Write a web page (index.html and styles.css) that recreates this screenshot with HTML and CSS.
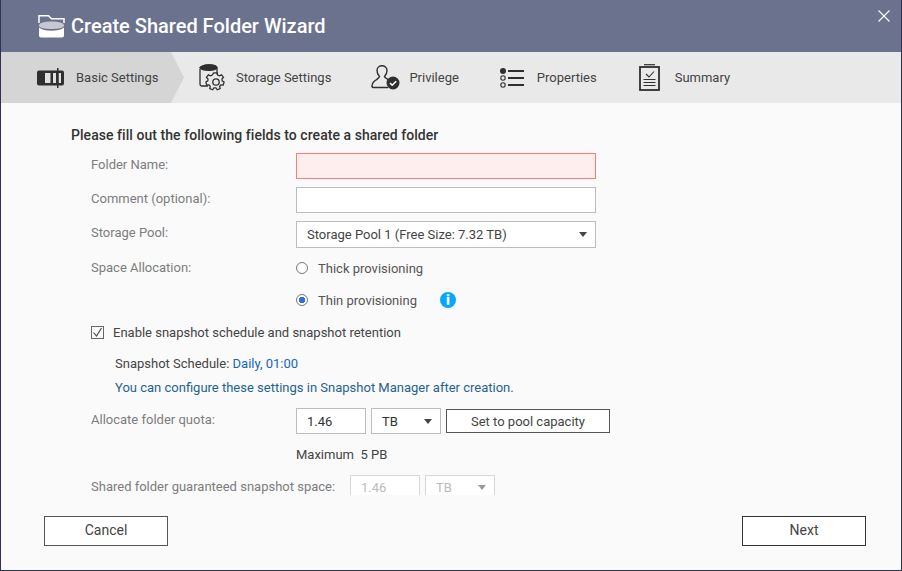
FILE: index.html
```html
<!DOCTYPE html>
<html lang="en">
<head>
<meta charset="utf-8">
<title>Create Shared Folder Wizard</title>
<link rel="stylesheet" href="styles.css">
</head>
<body>
<div class="window">
  <header class="titlebar">
    <svg class="title-icon" width="27" height="24" viewBox="0 0 27 24">
      <path d="M1 9V1.800h9.500l3 3H26V9" fill="none" stroke="#fff" stroke-width="1.500"/>
      <path d="M1 11Q2 7.500 13.500 7.500T26 11v1Q25 15 13.500 15T1 12Z" fill="#c6c8d4"/>
      <path d="M1 13.500Q5 16.800 13.500 16.800T26 13.500V21.500q0 2-2 2H3q-2 0-2-2Z" fill="#fff"/>
    </svg>
    <h1 class="title">Create Shared Folder Wizard</h1>
    <svg class="close" width="12" height="12" viewBox="0 0 12 12"><path d="M.5.5l11 11M11.500.5l-11 11" stroke="#fff" stroke-width="1.100"/></svg>
  </header>
  <nav class="steps">
    <div class="step step-active">
      <svg width="29" height="20" viewBox="0 0 29 20" class="ico-basic">
        <rect x="0" y="2.500" width="27" height="15" rx="2" fill="#2f2f2f"/>
        <rect x="8" y="5" width="5.500" height="10" fill="#e0e0e0"/>
        <rect x="16" y="5" width="3" height="10" fill="#e0e0e0"/>
        <rect x="21.500" y="5" width="2.500" height="10" fill="#e0e0e0"/>
        <rect x="20" y="0" width="1.500" height="20" fill="#2f2f2f"/>
      </svg>
      <span>Basic Settings</span>
    </div>
    <div class="step step-storage">
      <svg width="27" height="28" viewBox="0 0 27 28" fill="none" stroke="#2f2f2f" stroke-width="1.300">
        <path d="M9 22H3q-2 0-2-2V5" />
        <path d="M1 4.500C1 2.500 5 1 10 1s8 1.500 8 3.500v6"/>
        <path d="M1 3.500C3 1.500 6 .8 10 .8s7 .7 8 2.700c-1 2.200-4 2.800-8 2.800S2 5.700 1 3.500Z" fill="#2f2f2f"/>
        <path d="M15.500 11h3.500l.6 2.300 1.700.8 2.200-1 2 2.600-1.600 1.700.2 1.800 2 1.200-.9 3.100-2.400-.1-1.200 1.400.5 2.300-3 1.200-1.300-2h-2l-1.300 2-3-1.200.5-2.300-1.200-1.400-2.400.1-.9-3.100 2-1.200.2-1.800-1.600-1.700 2-2.600 2.200 1 1.700-.8Z" transform="translate(-.5 -2) scale(.98)"/>
        <circle cx="17" cy="18" r="3.200"/>
      </svg>
      <span>Storage Settings</span>
    </div>
    <div class="step step-privilege">
      <svg width="29" height="25" viewBox="0 0 29 25" class="ico-priv">
        <path d="M18 15c-2-1-4-2-4.500-3.500C15 10 16 7.500 16 5.500 16 2.500 13.500.8 11 .8S6 2.500 6 5.500c0 2 1 4.500 2.500 6C8 13 5 15 3 16.500 1.500 18 .8 20 1 21.500q.2 1 1.500 1H17" fill="none" stroke="#2f2f2f" stroke-width="1.400"/>
        <circle cx="22" cy="18" r="6.500" fill="#2f2f2f"/>
        <path d="M19 18l2.200 2.200 4-4" fill="none" stroke="#fff" stroke-width="1.600"/>
      </svg>
      <span>Privilege</span>
    </div>
    <div class="step step-props">
      <svg width="25" height="20" viewBox="0 0 25 20" fill="none" stroke="#2f2f2f">
        <circle cx="3" cy="3" r="3" fill="#2f2f2f" stroke="none"/>
        <circle cx="3" cy="10" r="2.200" stroke-width="1.100"/>
        <circle cx="3" cy="17" r="2.200" stroke-width="1.100"/>
        <path d="M8 3h16M8 10h16M8 17h16" stroke-width="1.800"/>
      </svg>
      <span>Properties</span>
    </div>
    <div class="step step-summary">
      <svg width="21" height="27" viewBox="0 0 21 27" fill="none" stroke="#2f2f2f">
        <path d="M5 .7h11" stroke-width="1.200"/>
        <rect x="1" y="3" width="19" height="23" stroke-width="1.800"/>
        <path d="M7 10l3 3 5-5.500" stroke-width="1.100"/>
        <path d="M4.500 15.500h12M4.500 18.500h12M4.500 21.500h12" stroke-width="1.100"/>
      </svg>
      <span>Summary</span>
    </div>
  </nav>
  <main class="content">
    <div class="scroll">
      <p class="lead">Please fill out the following fields to create a shared folder</p>
      <div class="row row-name">
        <label class="label">Folder Name:</label>
        <div class="field field-error"></div>
      </div>
      <div class="row row-comment">
        <label class="label">Comment (optional):</label>
        <div class="field"></div>
      </div>
      <div class="row row-pool">
        <label class="label">Storage Pool:</label>
        <div class="field field-select"><span>Storage Pool 1 (Free Size: 7.32 TB)</span><i class="caret"></i></div>
      </div>
      <div class="row row-thick">
        <label class="label label-thick">Space Allocation:</label>
        <div class="radio-line"><i class="radio"></i><span>Thick provisioning</span></div>
      </div>
      <div class="row row-thin">
        <span class="label"></span>
        <div class="radio-line"><i class="radio radio-on"></i><span>Thin provisioning</span><b class="info">i</b></div>
      </div>
      <div class="check-line">
        <svg class="check" width="13" height="13" viewBox="0 0 13 13" fill="none" stroke="#444"><rect x=".5" y=".5" width="12" height="12" stroke="#666"/><path d="M2.500 6.500l3 3.500 5-8" stroke-width="1.100"/></svg>
        <span>Enable snapshot schedule and snapshot retention</span>
      </div>
      <p class="snap">Snapshot Schedule: <span class="blue">Daily, 01:00</span></p>
      <p class="hint">You can configure these settings in Snapshot Manager after creation.</p>
      <div class="row row-quota">
        <label class="label">Allocate folder quota:</label>
        <div class="field field-num">1.46</div>
        <div class="field field-unit"><span>TB</span><i class="caret"></i></div>
        <button class="btn btn-pool" type="button">Set to pool capacity</button>
      </div>
      <p class="maximum">Maximum&nbsp; 5 PB</p>
      <div class="row-guarantee">
        <label class="label-wide">Shared folder guaranteed snapshot space:</label>
        <div class="field field-num field-off">1.46</div>
        <div class="field field-unit field-off"><span>TB</span><i class="caret"></i></div>
      </div>
    </div>
  </main>
  <footer class="footer">
    <button class="btn btn-main" type="button">Cancel</button>
    <button class="btn btn-main btn-next" type="button">Next</button>
  </footer>
</div>
</body>
</html>
```

FILE: styles.css
```css
* { box-sizing: border-box; }
html, body { margin: 0; height: 100%; }
body {
  width: 902px;
  height: 571px;
  overflow: hidden;
  background: #2f3256;
  font-family: Roboto, "Liberation Sans", sans-serif;
  font-size: 13px;
  color: #444;
  padding: 0 1px 1px 1px;
}
.window {
  height: 570px;
  display: flex;
  flex-direction: column;
  background: #fafafa;
  position: relative;
}
.titlebar {
  height: 52px;
  flex: none;
  background: #6b728e;
  display: flex;
  align-items: center;
  padding-left: 37px;
}
.title-icon { margin-right: 6px; margin-top: -1px; }
.title {
  margin: 0;
  font-size: 20px;
  font-weight: 500;
  color: #fff;
}
.close { position: absolute; right: 11px; top: 10px; }
.steps {
  height: 51px;
  flex: none;
  background: #e9e9e9;
  display: flex;
  align-items: center;
  font-size: 13px;
  color: #444;
}
.step { display: flex; align-items: center; height: 100%; }
.step-active {
  width: 183px;
  padding-left: 36px;
  gap: 10px;
  background: #d5d5d5;
  clip-path: polygon(0 0, 170px 0, 183px 50%, 170px 100%, 0 100%);
}
.step-storage { margin-left: 15px; gap: 10px; }
.step-privilege { margin-left: 40px; gap: 9px; }
.step-props { margin-left: 41px; gap: 12px; }
.step-summary { margin-left: 42px; gap: 15px; }
.content { flex: 1; padding: 0 0 0 70px; min-height: 0; }
.scroll { height: 392px; overflow: hidden; }
.lead {
  margin: 0;
  padding-top: 24px;
  height: 50px;
  font-size: 14px;
  letter-spacing: .05px;
  font-weight: 500;
  color: #333;
}
.row { display: flex; align-items: center; }
.label { width: 225px; padding: 0 0 4px 20px; color: #7d7d7d; flex: none; }
.label-thick { padding-bottom: 2px; }
.field {
  width: 300px;
  height: 26px;
  background: #fff;
  border: 1px solid #bdbdbd;
  display: flex;
  align-items: center;
  justify-content: space-between;
}
.field-error { background: #ffeeee; border-color: #fb7a72; }
.row-comment { margin-top: 8px; }
.row-pool { margin-top: 8px; }
.field-select { height: 27px; padding: 0 8px 0 10px; color: #444; }
.caret {
  width: 0;
  height: 0;
  border-left: 4px solid transparent;
  border-right: 4px solid transparent;
  border-top: 5px solid #444;
}
.row-thick { margin-top: 12px; height: 16px; }
.row-thin { margin-top: 16px; height: 16px; }
.radio-line { display: flex; align-items: center; color: #555; }
.radio {
  width: 12px;
  height: 12px;
  border-radius: 50%;
  border: 1px solid #777;
  margin-right: 10px;
  background: #fff;
  flex: none;
}
.radio-on { background: radial-gradient(circle, #2f6fde 0 3px, #fff 3.500px); }
.info {
  width: 16px;
  height: 16px;
  margin-left: 23px;
  border-radius: 50%;
  background: #0aa5ff;
  color: #fff;
  font-size: 14px;
  font-weight: 900;
  text-align: center;
  line-height: 16px;
}
.check-line { display: flex; align-items: center; margin: 16px 0 0 20px; height: 16px; gap: 9px; }
.check-line span { color: #444; }
.snap { margin: 16px 0 0 44px; height: 16px; line-height: 16px; }
.blue { color: #1565c0; }
.hint { margin: 8px 0 0 44px; height: 16px; line-height: 16px; color: #1f6391; }
.row-quota { margin-top: 12px; }
.field-num { width: 70px; padding-left: 10px; justify-content: flex-start; color: #333; }
.field-unit { width: 70px; margin-left: 5px; padding: 0 8px 0 10px; color: #333; }
.btn {
  font-family: inherit;
  font-size: 13px;
  color: #444;
  background: #fff;
  border: 1px solid #555;
  padding: 0;
}
.btn-pool { width: 164px; height: 24px; margin-left: 5px; }
.maximum { margin: 13px 0 0 225px; height: 16px; line-height: 16px; color: #444; }
.row-guarantee { display: flex; align-items: flex-start; margin-top: 12px; }
.label-wide { width: 279px; padding: 4px 0 0 20px; color: #7d7d7d; flex: none; }
.field-off { color: #bbb; border-color: #d8d8d8; padding-bottom: 2px; }
.field-off .caret { border-top-color: #999; }
.footer {
  height: 75px;
  flex: none;
  display: flex;
  justify-content: space-between;
  padding: 21px 35px 0 43px;
}
.btn-main { width: 124px; height: 30px; font-size: 14px; padding-bottom: 2px; }
.btn-next { border-color: #333; }
```
